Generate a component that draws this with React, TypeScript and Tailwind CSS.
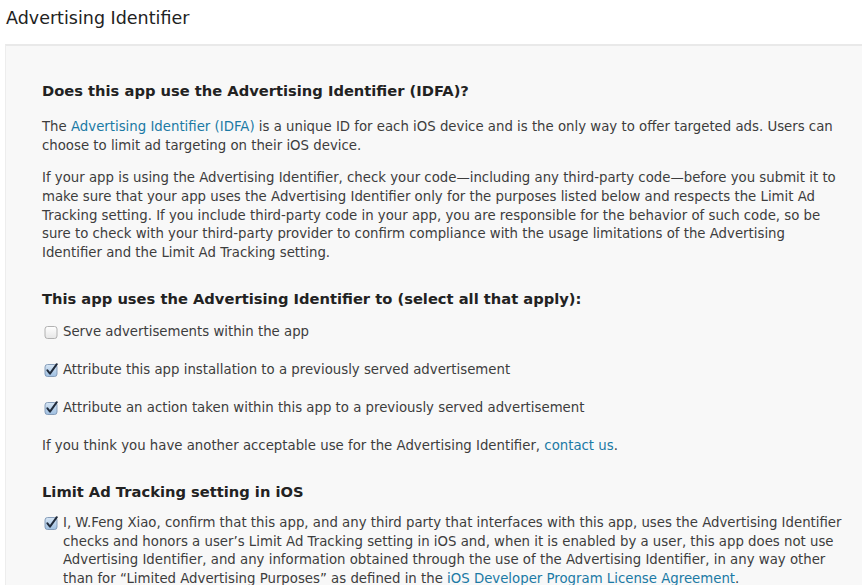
import React from 'react';

const font = 'font-["DejaVu_Sans","Noto_Sans",sans-serif]';

function Checkbox({ checked }: { checked: boolean }) {
  return (
    <svg width="14" height="14" viewBox="0 0 14 14" className="shrink-0">
      <defs>
        <linearGradient id={checked ? 'cbOn' : 'cbOff'} x1="0" y1="0" x2="0" y2="1">
          <stop offset="0" stopColor={checked ? '#d7e6f5' : '#ffffff'} />
          <stop offset="1" stopColor={checked ? '#9fbfe0' : '#e6e6e6'} />
        </linearGradient>
      </defs>
      <rect x="1" y="1.5" width="12" height="12" rx="2.5" fill={`url(#${checked ? 'cbOn' : 'cbOff'})`} stroke={checked ? '#7d95b3' : '#a9a9a9'} strokeWidth="0.9" />
      {checked && (
        <path d="M3.4 7.4 L6 10.6 L12.8 1.2" fill="none" stroke="#1f2a3a" strokeWidth="2" strokeLinecap="round" strokeLinejoin="round" />
      )}
    </svg>
  );
}

function Link({ children }: { children: React.ReactNode }) {
  return <span className="text-[#1b7aa5]">{children}</span>;
}

const options = [
  { label: 'Serve advertisements within the app', checked: false },
  { label: 'Attribute this app installation to a previously served advertisement', checked: true },
  { label: 'Attribute an action taken within this app to a previously served advertisement', checked: true },
];

export default function App() {
  return (
    <div className={`w-[864px] h-[585px] overflow-hidden bg-white ${font} text-[#3d3d3d]`}>
      {/* Page title */}
      <h1 className="pl-[6px] pt-[5px] h-[44px] text-[17.5px] text-[#222]">Advertising Identifier</h1>

      {/* Panel */}
      <div className="ml-[5px] mr-[2px] h-[600px] bg-[#f8f8f8] border-t-2 border-[#e9e9e9] border-l border-l-[#ededed] pl-[36px] pr-[23px] pt-[35px]">
        <h2 className="text-[14.7px] font-bold text-[#222] leading-[20px]">
          Does this app use the Advertising Identifier (IDFA)?
        </h2>
        <p className="mt-[17px] text-[13.3px] leading-[18.7px]">
          The <Link>Advertising Identifier (IDFA)</Link> is a unique ID for each iOS device and is the only way to offer targeted ads. Users can choose to limit ad targeting on their iOS device.
        </p>
        <p className="mt-[14px] text-[13.3px] leading-[18.6px]">
          If your app is using the Advertising Identifier, check your code—including any third-party code—before you submit it to make sure that your app uses the Advertising Identifier only for the purposes listed below and respects the Limit Ad Tracking setting. If you include third-party code in your app, you are responsible for the behavior of such code, so be sure to check with your third-party provider to confirm compliance with the usage limitations of the Advertising Identifier and the Limit Ad Tracking setting.
        </p>

        <h2 className="mt-[27px] text-[14.7px] font-bold text-[#222] leading-[20px]">
          This app uses the Advertising Identifier to (select all that apply):
        </h2>
        <div className="mt-[13px] flex flex-col gap-[19px]">
          {options.map((o) => (
            <label key={o.label} className="flex items-center gap-[5px] pl-[2px] text-[13.3px] leading-[19px]">
              <Checkbox checked={o.checked} />
              <span>{o.label}</span>
            </label>
          ))}
        </div>
        <p className="mt-[19px] text-[13.3px] leading-[19px]">
          If you think you have another acceptable use for the Advertising Identifier, <Link>contact us</Link>.
        </p>

        <h2 className="mt-[27px] text-[14.7px] font-bold text-[#222] leading-[20px]">
          Limit Ad Tracking setting in iOS
        </h2>
        <div className="mt-[12px] mr-[-14px] flex items-start gap-[5px] pl-[2px] text-[13.3px] leading-[18.4px]">
          <div className="pt-[2px]">
            <Checkbox checked />
          </div>
          <p>
            I, W.Feng Xiao, confirm that this app, and any third party that interfaces with this app, uses the Advertising Identifier checks and honors a user’s Limit Ad Tracking setting in iOS and, when it is enabled by a user, this app does not use Advertising Identifier, and any information obtained through the use of the Advertising Identifier, in any way other than for “Limited Advertising Purposes” as defined in the <Link>iOS Developer Program License Agreement</Link>.
          </p>
        </div>
      </div>
    </div>
  );
}
